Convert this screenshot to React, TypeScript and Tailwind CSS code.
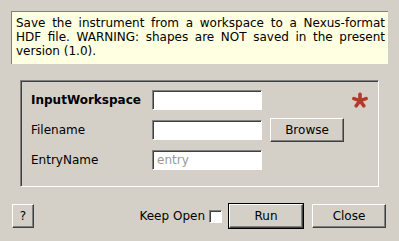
import React from "react";

const raised =
  "border border-t-white border-l-white border-b-[#404040] border-r-[#404040] shadow-[inset_-1px_-1px_0_#808080] bg-[#d4d0c8]";
const sunken =
  "border border-t-[#808080] border-l-[#808080] border-b-white border-r-white shadow-[inset_1px_1px_0_#404040] bg-white";

const Field = ({ placeholder }: { placeholder?: string }) => (
  <div className={`h-[20px] w-[110px] ${sunken} flex items-center pl-[4px]`}>
    {placeholder && <span className="text-[#9a9a9a]">{placeholder}</span>}
  </div>
);

const Asterisk = () => (
  <svg width="16" height="16" viewBox="0 0 16 16">
    <g stroke="#b5382a" strokeWidth="3.6" strokeLinecap="round">
      {[0, 72, 144, 216, 288].map((a) => (
        <line
          key={a}
          x1="8"
          y1="8.6"
          x2="8"
          y2="2.2"
          transform={`rotate(${a} 8 8.6)`}
        />
      ))}
    </g>
  </svg>
);

export default function App() {
  return (
    <div className="w-[399px] h-[241px] bg-[#d4d0c8] font-['DejaVu_Sans',sans-serif] text-[12px] text-black pt-[11px] overflow-hidden">
      {/* Description */}
      <div className="ml-[11px] w-[377px] h-[53px] bg-[#ffffe1] border-t border-l border-[#808080] pl-[4px] pr-[3px] pt-[4px] leading-[14px] text-justify">
        Save the instrument from a workspace to a Nexus-format HDF file.
        WARNING: shapes are NOT saved in the present version (1.0).
      </div>

      {/* Properties */}
      <div className="mt-[16px] ml-[20px] w-[359px] h-[107px] border border-t-[#808080] border-l-[#808080] border-b-white border-r-white shadow-[inset_1px_1px_0_#404040] pt-[9px] pl-[10px]">
        <div className="grid grid-cols-[113px_110px_74px_16px] grid-rows-[20px_20px_20px] gap-x-2 gap-y-[10px] items-center">
          <span className="font-bold">InputWorkspace</span>
          <Field />
          <span />
          <Asterisk />

          <span>Filename</span>
          <Field />
          <div className={`h-[24px] w-[74px] ${raised} flex items-center justify-center`}>
            Browse
          </div>
          <span />

          <span>EntryName</span>
          <Field placeholder="entry" />
          <span />
          <span />
        </div>
      </div>

      {/* Buttons */}
      <div className="mt-[16px] flex items-center pl-[12px] pr-[13px] h-[26px]">
        <div className={`h-[24px] w-[22px] ${raised} flex items-center justify-center`}>?</div>
        <div className="flex-1" />
        <span>Keep Open</span>
        <div className={`ml-[4px] h-[13px] w-[13px] ${sunken}`} />
        <div className="ml-[6px] h-[26px] w-[76px] border border-black">
          <div className={`h-full w-full ${raised} flex items-center justify-center`}>Run</div>
        </div>
        <div className={`ml-[8px] h-[24px] w-[74px] ${raised} flex items-center justify-center`}>
          Close
        </div>
      </div>
    </div>
  );
}
